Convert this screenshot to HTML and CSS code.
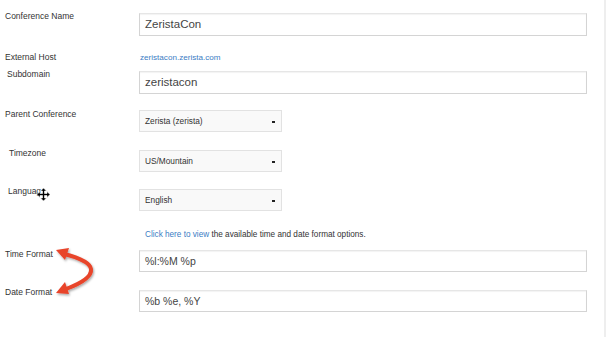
FILE: index.html
```html
<!DOCTYPE html>
<html lang="en">
<head>
  <title>Conference Settings</title>
  <link rel="stylesheet" href="styles.css">
</head>
<body>

  <div class="page">
    <div class="row row-name">
      <label class="label">Conference Name</label>
      <div class="control"><div class="input">ZeristaCon</div></div>
    </div>

    <div class="row row-host">
      <label class="label">External Host</label>
      <div class="control"><a class="link host" href="#">zeristacon.zerista.com</a></div>
    </div>

    <div class="row row-sub">
      <label class="label indent">Subdomain</label>
      <div class="control"><div class="input">zeristacon</div></div>
    </div>

    <div class="row row-parent">
      <label class="label">Parent Conference</label>
      <div class="control"><div class="select">Zerista (zerista)<span class="caret"></span></div></div>
    </div>

    <div class="row row-tz">
      <label class="label indent-lg">Timezone</label>
      <div class="control"><div class="select">US/Mountain<span class="caret"></span></div></div>
    </div>

    <div class="row row-lang">
      <label class="label indent-md">Languag<span class="cursor-anchor">
        <!-- move cursor from the screen recording -->
        <svg class="cursor" width="13" height="13" viewBox="0 0 13 13">
          <path d="M6.5 0 L9.5 3 L7.5 3 L7.5 5.5 L10 5.5 L10 3.5 L13 6.5 L10 9.5 L10 7.5 L7.5 7.5 L7.5 10 L9.5 10 L6.5 13 L3.5 10 L5.5 10 L5.5 7.5 L3 7.5 L3 9.5 L0 6.5 L3 3.5 L3 5.5 L5.5 5.5 L5.5 3 L3.5 3 Z" fill="#000" stroke="#fff" stroke-width="0.6"/>
        </svg>
      </span></label>
      <div class="control"><div class="select">English<span class="caret"></span></div></div>
    </div>

    <div class="row row-help">
      <div class="label"></div>
      <div class="control help"><a class="link" href="#">Click here to view</a> the available time and date format options.</div>
    </div>

    <div class="row row-time">
      <label class="label">Time Format</label>
      <div class="control"><div class="input small">%l:%M %p</div></div>
    </div>

    <div class="row row-date">
      <label class="label">Date Format</label>
      <div class="control"><div class="input small">%b %e, %Y</div></div>
    </div>

    <!-- red annotation arrow drawn over the labels -->
    <svg class="annotation" width="60" height="60" viewBox="0 0 60 60">
      <defs>
        <filter id="shadow" x="-20%" y="-20%" width="140%" height="140%">
          <feDropShadow dx="1" dy="1.5" stdDeviation="1" flood-color="#000" flood-opacity="0.35"/>
        </filter>
      </defs>
      <g filter="url(#shadow)" fill="#e8442b">
        <path d="M10 9 C26 13 36 18 37 24 C38 31 28 38 12 44" fill="none" stroke="#e8442b" stroke-width="4" stroke-linecap="round"/>
        <polygon points="2,5 15,3 11,15"/>
        <polygon points="2,48 11,37 15,49"/>
      </g>
    </svg>
  </div>

</body>
</html>
```

FILE: styles.css
```css
* { box-sizing: border-box; margin: 0; padding: 0; }
body {
  font-family: "Liberation Sans", Arial, sans-serif;
  background-color: #fff;
  color: #333;
}
.page {
  position: relative;
  width: 606px;
  height: 337px;
  border-right: 2px solid #eeeeee;
  padding-top: 10px;
}
.row { display: flex; align-items: flex-start; }
.label {
  flex: 0 0 139px;
  padding-left: 5px;
  font-size: 8.5px;
  line-height: 12px;
  color: #333;
}
.label.indent { padding-left: 7px; }
.label.indent-md { padding-left: 8px; }
.label.indent-lg { padding-left: 9px; }
.control { flex: 1; font-size: 8.5px; line-height: 12px; }
.input {
  width: 448px;
  height: 23px;
  padding: 0 5px;
  border: 1px solid #d4d4d4;
  border-top-color: #e6e6e6;
  box-shadow: inset 0 1px 1px rgba(0,0,0,0.05);
  background: #fff;
  font-size: 11.5px;
  line-height: 21px;
  color: #444;
}
.input.small { height: 22px; font-size: 10.5px; line-height: 20px; }
.select {
  position: relative;
  width: 143px;
  height: 22px;
  padding: 0 5px;
  border: 1px solid #e2e2e2;
  background: #f9f9f9;
  font-size: 8.3px;
  line-height: 20px;
  color: #333;
}
.caret {
  position: absolute;
  right: 6px;
  top: 10px;
  width: 3px;
  height: 1.5px;
  background: #222;
}
.link { color: #3b7dc4; text-decoration: none; }
.host { font-size: 8.1px; padding-left: 1px; }
.help { padding-left: 6px; font-size: 8.2px; }

.row-name .input { margin-top: 3px; }
.row-host { margin-top: 15px; }
.row-sub { margin-top: 4px; }
.row-sub .input { margin-top: 3px; }
.row-parent { margin-top: 14px; }
.row-parent .select { margin-top: 2px; }
.row-tz { margin-top: 15px; }
.row-tz .select { margin-top: 3px; }
.row-lang { margin-top: 13px; }
.row-lang .select { margin-top: 4px; }
.row-help { margin-top: 18px; }
.row-time { margin-top: 7px; }
.row-time .input { margin-top: 2px; }
.row-date { margin-top: 14px; }
.row-date .input { margin-top: 4px; }

.cursor-anchor { position: relative; }
.cursor { position: absolute; left: -4px; top: 2px; }
.annotation { position: absolute; left: 54px; top: 245px; }
```
